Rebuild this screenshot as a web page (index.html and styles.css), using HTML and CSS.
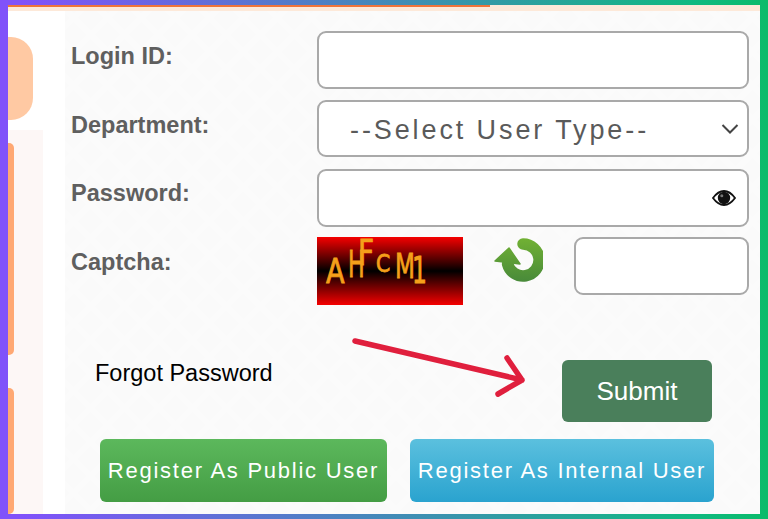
FILE: index.html
```html
<!DOCTYPE html>
<html lang="en">
<head>
<meta charset="utf-8">
<title>Login</title>
<link rel="stylesheet" href="styles.css">
</head>
<body>
<div class="frame">
  <div class="page">
    <div class="topstrip"><div class="topline"></div></div>
    <div class="content">
      <aside class="side">
        <div class="blob"></div>
        <div class="pinkstrip">
          <div class="bar bar-one"></div>
          <div class="bar bar-two"></div>
        </div>
      </aside>
      <main class="main">
        <div class="row">
          <label class="label">Login ID:</label>
          <input class="field" type="text">
        </div>
        <div class="row">
          <label class="label">Department:</label>
          <div class="field selectbox">
            <span class="selecttext">--Select User Type--</span>
            <svg class="chev" width="18" height="10" viewBox="0 0 18 10"><path d="M1.5 1 L9 8.5 L16.5 1" fill="none" stroke="#444" stroke-width="2"/></svg>
          </div>
        </div>
        <div class="row">
          <label class="label label-pass">Password:</label>
          <div class="field passbox">
            <svg class="eye" width="24" height="16" viewBox="0 0 24 16"><path d="M1 8 C5 2.5 8.500 1 12 1 C15.500 1 19 2.500 23 8 C19 13.500 15.500 15 12 15 C8.500 15 5 13.500 1 8 Z" fill="#fff" stroke="#111" stroke-width="1.800"/><circle cx="12" cy="8" r="6.200" fill="#111"/><circle cx="9.800" cy="5.800" r="1.500" fill="#777"/></svg>
          </div>
        </div>
        <div class="row row-captcha">
          <label class="label">Captcha:</label>
          <svg class="captcha" width="146" height="68" viewBox="0 0 146 68">
            <defs>
              <linearGradient id="cg" x1="0" y1="0" x2="0" y2="1">
                <stop offset="0" stop-color="#f50000"/>
                <stop offset="0.5" stop-color="#000"/>
                <stop offset="1" stop-color="#f50000"/>
              </linearGradient>
            </defs>
            <rect width="146" height="68" fill="url(#cg)"/>
            <g class="captext">
              <text x="0" y="0" font-size="34" transform="translate(9 46) scale(.8 1)">A</text>
              <text x="0" y="0" font-size="37" transform="translate(31 40) scale(.6 1)">H</text>
              <text x="0" y="0" font-size="36" transform="translate(41 28) scale(.78 1)">F</text>
              <text x="0" y="0" font-size="24" transform="translate(59 35) scale(.85 1)">C</text>
              <text x="0" y="0" font-size="34" transform="translate(78 41) scale(.68 1)">M</text>
              <text x="0" y="0" font-size="38" transform="translate(95 46) scale(.62 1)">1</text>
            </g>
          </svg>
          <svg class="refresh" width="50" height="46" viewBox="0 0 50 46">
            <defs>
              <linearGradient id="rg" gradientUnits="userSpaceOnUse" x1="0" y1="0" x2="0" y2="46">
                <stop offset="0" stop-color="#72b233"/>
                <stop offset="1" stop-color="#47893a"/>
              </linearGradient>
            </defs>
            <path d="M30 7 A16 16 0 1 1 14.600 27" fill="none" stroke="url(#rg)" stroke-width="11.500" stroke-linecap="round"/>
            <path d="M2 24 L16 11 L27 27 Z" fill="url(#rg)" stroke="url(#rg)" stroke-width="1.500" stroke-linejoin="round"/>
          </svg>
          <input class="field captchainput" type="text">
        </div>
        <div class="actions">
          <a class="forgot">Forgot Password</a>
          <button class="btn submit" type="button">Submit</button>
        </div>
        <div class="registers">
          <button class="btn reg green" type="button">Register As Public User</button>
          <button class="btn reg blue" type="button">Register As Internal User</button>
        </div>
      </main>
      <svg class="arrow" width="180" height="64" viewBox="0 0 180 64">
        <path d="M3 4 L170 43 M155 21 L170 43 L146 57" fill="none" stroke="#e01f3d" stroke-width="5.500" stroke-linecap="round" stroke-linejoin="round"/>
      </svg>
    </div>
  </div>
</div>
</body>
</html>
```
FILE: styles.css
```css
* { box-sizing: border-box; }
html, body { margin: 0; height: 100%; overflow: hidden; }
body { font-family: "Liberation Sans", Arial, sans-serif; }

.frame {
  width: 768px;
  height: 519px;
  padding: 5px 8px 5px 8px;
  background: linear-gradient(90deg, #8052fa 0%, #8052fa 3%, #10b981 90%, #0abb6a 100%);
}
.page {
  height: 100%;
  background: #fff;
  display: flex;
  flex-direction: column;
  overflow: hidden;
}
.topstrip { height: 6px; background: #fde9d9; flex: none; }
.topline { width: 482px; height: 2px; background: #f0743a; }

.content { flex: 1; display: flex; position: relative; min-height: 0; }

.side { width: 57px; flex: none; display: flex; flex-direction: column; padding-top: 26px; }
.blob {
  width: 25px;
  height: 83px;
  background: #ffc9a3;
  border-radius: 0 22px 22px 0;
  flex: none;
}
.pinkstrip {
  margin-top: 10px;
  width: 35px;
  flex: 1;
  background: #fdf7f6;
  padding-top: 13px;
  display: flex;
  flex-direction: column;
  gap: 33px;
}
.bar { width: 6px; background: #ffa873; border-radius: 0 5px 5px 0; }
.bar-one { height: 212px; }
.bar-two { flex: 1; }

.main {
  flex: 1;
  background-color: #fafafa;
  background-image:
    repeating-linear-gradient(45deg, transparent 0 18px, #fbfbfb 18px 24px),
    repeating-linear-gradient(-45deg, transparent 0 18px, #fbfbfb 18px 24px);
  padding: 20px 12px 0 6px;
  display: flex;
  flex-direction: column;
  gap: 11px;
}
.row { display: flex; align-items: flex-start; height: 58px; flex: none; }
.row-captcha { margin-top: -1px; }
.label {
  width: 246px;
  flex: none;
  font-size: 23.5px;
  font-weight: 700;
  color: #5f5f5f;
  line-height: 27px;
  padding-top: 12px;
}
.label-pass { padding-top: 11px; }
.field {
  flex: 1;
  height: 58px;
  background: #fff;
  border: 2px solid #a9a9a9;
  border-radius: 9px;
  outline: none;
  display: flex;
  align-items: center;
}
.selectbox { height: 57px; justify-content: space-between; padding: 0 8px 0 31px; }
.selecttext { font-size: 27px; letter-spacing: 2.9px; color: #5a5a5a; padding-top: 3px; }
.passbox { justify-content: flex-end; padding-right: 11px; }

.captcha { flex: none; display: block; }
.captext text { font-family: "DejaVu Sans", sans-serif; fill: #f5a01a; stroke: #f5a01a; stroke-width: 0.8px; }
.refresh { flex: none; margin: 0 31px 0 30px; }
.captchainput { flex: none; width: 175px; }

.actions {
  display: flex;
  justify-content: space-between;
  align-items: flex-start;
  padding: 50px 37px 0 24px;
  flex: none;
  height: 116px;
  margin-top: 4px;
}
.forgot { font-size: 23.5px; color: #000; line-height: 27px; }
.btn {
  font-family: inherit;
  color: #fff;
  border: 0;
  border-radius: 6px;
  padding: 0;
  flex: none;
}
.submit { width: 150px; height: 62px; background: #4a7f5b; font-size: 26px; }
.registers {
  display: flex;
  gap: 23px;
  padding-left: 29px;
  margin-top: 2px;
  flex: none;
}
.reg { height: 63px; font-size: 22px; letter-spacing: 1.75px; white-space: nowrap; }
.green { width: 287px; background: linear-gradient(#5cb85c, #449d44); }
.blue { width: 304px; background: linear-gradient(#5bc0de, #2aa3cf); }

.arrow { position: absolute; left: 344px; top: 326px; }
```
